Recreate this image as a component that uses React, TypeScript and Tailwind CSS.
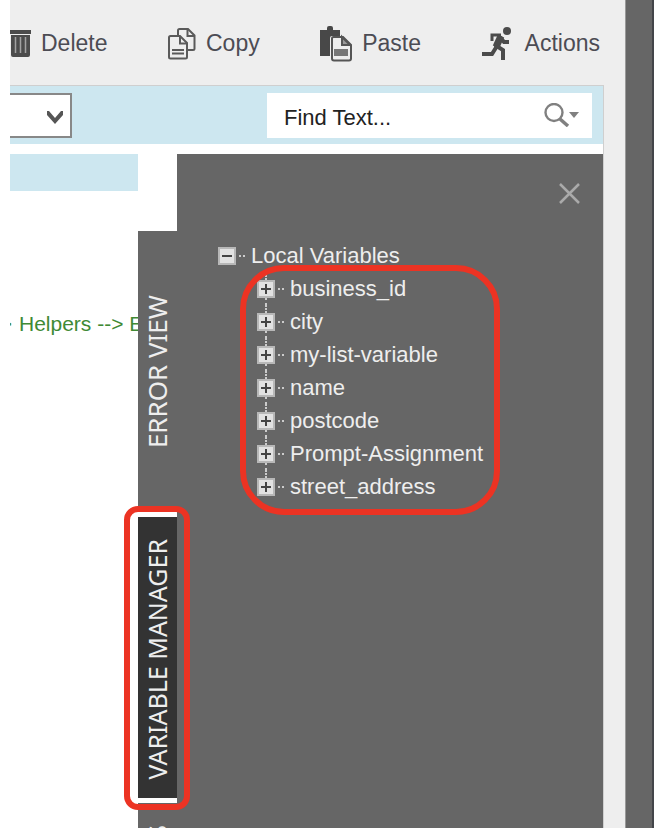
import React from "react";

const variables = [
  "business_id",
  "city",
  "my-list-variable",
  "name",
  "postcode",
  "Prompt-Assignment",
  "street_address",
];

function TrashIcon() {
  return (
    <svg width="22" height="28" viewBox="0 0 22 28" className="shrink-0" aria-hidden="true">
      <path d="M0 0h21v4H0zM1 5h19v20a2 2 0 0 1-2 2H3a2 2 0 0 1-2-2z" fill="#4b4b4b" />
      <path d="M5.5 7v16M10.5 7v16M15.5 7v16" stroke="#a2a2a2" strokeWidth="1.5" />
    </svg>
  );
}

function CopyIcon() {
  return (
    <svg width="28" height="32" viewBox="0 0 28 32" fill="none" stroke="#5a5a5a" strokeWidth="2" className="shrink-0" aria-hidden="true">
      <path d="M10 8V2.500q0-1.500 1.500-1.500H20l6.500 6.500V20.500q0 1.500-1.500 1.500H20" />
      <path d="M19.500 1v7h7" />
      <path d="M2.500 8H12l7 7v14q0 1.500-1.500 1.500h-15Q1 30.500 1 29V9.500Q1 8 2.500 8z" />
      <path d="M12 8v7.500h7" />
      <path d="M4 22h12M4 25.500h12" />
    </svg>
  );
}

function PasteIcon() {
  return (
    <svg width="32" height="36" viewBox="0 0 32 36" className="shrink-0" aria-hidden="true">
      <path d="M0 4h7V2Q7 0 9 0h2q2 0 2 2v2h7v6h-8q-2 0-2 2v18H0z" fill="#484848" />
      <path d="M13.500 11H23l8 8v13.500q0 2-2 2H14q-2 0-2-2V12.500q0-1.500 1.500-1.500z" fill="#eeeeee" stroke="#555555" strokeWidth="2" />
      <path d="M22 11v8h8z" fill="#999999" stroke="#555555" strokeWidth="2" />
      <path d="M14 23h14v7H14z" fill="#777777" />
    </svg>
  );
}

function RunnerIcon() {
  return (
    <svg width="29" height="34" viewBox="0 0 29 34" fill="none" stroke="#4b4b4b" strokeWidth="4" className="shrink-0" aria-hidden="true">
      <circle cx="25" cy="4" r="4" fill="#4b4b4b" stroke="none" />
      <path d="M10 14V8h9" strokeWidth="3" />
      <path d="M19 9l-5 11" strokeWidth="7" />
      <path d="M18 10l4 5h5" />
      <path d="M13 18l8 5v10" />
      <path d="M15 19l-5 8H0" />
    </svg>
  );
}

function ToolButton({ icon, label, className = "" }: { icon: React.ReactNode; label: string; className?: string }) {
  return (
    <button type="button" className={`flex items-center whitespace-nowrap text-[23px] text-[#4c4c54] ${className}`}>
      {icon}
      {label}
    </button>
  );
}

function Toggle({ open, label }: { open: boolean; label: string }) {
  return (
    <button type="button" aria-label={label} aria-expanded={open} className="relative size-[18px] shrink-0 border-2 border-[#b8b8b8] bg-[#e2e2e2]">
      <svg width="14" height="14" viewBox="0 0 14 14" stroke="#444444" strokeWidth="2" aria-hidden="true">
        <path d={open ? "M2 7h10" : "M2 7h10M7 2v10"} />
      </svg>
    </button>
  );
}

function Dots() {
  return <span className="mr-[6px] ml-[3px] w-[6px] border-t-2 border-dotted border-[#cccccc]" />;
}

function VariableTree() {
  return (
    <ul className="pl-[41px] text-[22px] leading-[33px] text-[#eeeeee]">
      <li>
        <div className="flex h-[33px] items-center">
          <Toggle open label="Collapse Local Variables" />
          <Dots />
          Local Variables
        </div>
        <div className="relative mr-[103px]">
          <ul className="pl-[39px]">
            {variables.map((name, i) => (
              <li key={name} className="flex h-[33px] items-center">
                <span className="flex h-full flex-col items-center">
                  <span className="h-[8px] border-l-2 border-dotted border-[#cccccc]" />
                  <Toggle open={false} label={`Expand ${name}`} />
                  {i < variables.length - 1 && <span className="flex-1 border-l-2 border-dotted border-[#cccccc]" />}
                </span>
                <Dots />
                {name}
              </li>
            ))}
          </ul>
          <span aria-hidden="true" className="pointer-events-none absolute -top-[7px] right-0 -bottom-[12px] left-[22px] rounded-[44px] border-6 border-[#ec3323]" />
        </div>
      </li>
    </ul>
  );
}

function SideTab({ label, active = false, className = "justify-center text-[25px]" }: { label: string; active?: boolean; className?: string }) {
  return (
    <button
      type="button"
      className={`relative flex h-[281px] w-full shrink-0 flex-col items-center ${className} ${active ? "bg-[#333333] pt-1" : "bg-[#666666]"}`}
    >
      <span className="rotate-180 font-['Noto_Sans',sans-serif] leading-[39px] whitespace-nowrap text-[#eeeeee] [writing-mode:vertical-rl]">
        {label}
      </span>
      {active && (
        <span aria-hidden="true" className="pointer-events-none absolute -top-[11px] -right-[13px] -bottom-[12px] -left-[14px] z-10 rounded-[14px] border-6 border-[#ec3323]" />
      )}
    </button>
  );
}

export default function App() {
  return (
    <div className="h-screen overflow-hidden bg-white pr-1 pb-[2px] pl-[10px] font-['Liberation_Sans',Arial,sans-serif]">
      <div className="flex h-full overflow-hidden bg-[#eeeeee]">
        <div className="flex min-w-0 flex-1 flex-col">
          <header className="flex h-[85px] shrink-0 items-center justify-between pt-[2px] pr-1">
            <ToolButton icon={<TrashIcon />} label="Delete" className="gap-[9px]" />
            <ToolButton icon={<CopyIcon />} label="Copy" className="gap-[10px]" />
            <ToolButton icon={<PasteIcon />} label="Paste" className="gap-[10px]" />
            <ToolButton icon={<RunnerIcon />} label="Actions" className="gap-[14px]" />
          </header>

          <main className="flex min-h-0 flex-1 flex-col border-t border-r border-[#cfcfcf] bg-white">
            <div className="flex h-[58px] shrink-0 items-center justify-between bg-[#cde7f0] pr-[11px]">
              <div className="relative w-[62px]">
                <select aria-label="Scope" className="block h-[45px] w-full appearance-none border-2 border-l-0 border-[#888888] bg-white" />
                <svg width="16" height="14" viewBox="0 0 16 14" className="pointer-events-none absolute top-[17px] right-[9px]" aria-hidden="true">
                  <path d="M0 1h2l6 7 6-7h2v4l-8 9-8-9z" fill="#555555" />
                </svg>
              </div>
              <div className="flex h-[45px] w-[325px] items-center bg-white pr-[13px] pl-[17px]">
                <input
                  aria-label="Find text"
                  placeholder="Find Text..."
                  className="min-w-0 flex-1 pt-1 text-[22px] outline-none placeholder:text-[#222222]"
                />
                <button type="button" aria-label="Search options">
                  <svg width="36" height="24" viewBox="0 0 36 24" aria-hidden="true">
                    <circle cx="11" cy="9.500" r="8.500" fill="none" stroke="#808080" strokeWidth="2.400" />
                    <path d="M17 16l8 7" stroke="#808080" strokeWidth="3.500" />
                    <path d="M26 9h10l-5 6z" fill="#808080" />
                  </svg>
                </button>
              </div>
            </div>

            <div className="flex min-h-0 flex-1 pt-[10px]">
              <section className="min-w-0 flex-1 overflow-hidden">
                <div className="h-[37px] bg-[#cde7f0]" />
                <p className="flex gap-[7px] pt-[117px] text-[21px] leading-[32px] whitespace-pre text-[#3f8a35]">
                  <span className="flex w-[2px] shrink-0 justify-end overflow-hidden">{">"}</span>
                  {"Helpers --> Error"}
                </p>
              </section>
              <nav aria-label="Side panels" className="mt-[77px] flex w-[39px] flex-col gap-[5px]">
                <SideTab label="ERROR VIEW" className="justify-center text-[26px]" />
                <SideTab label="VARIABLE MANAGER" active />
                <SideTab label="S" className="justify-start pt-[22px] text-[25px]" />
              </nav>
              <aside className="w-[426px] bg-[#666666]">
                <div className="flex h-[85px] items-start justify-end pt-[29px] pr-[23px]">
                  <button type="button" aria-label="Close">
                    <svg width="21" height="21" viewBox="0 0 21 21" stroke="#aaaaaa" strokeWidth="2.500" aria-hidden="true">
                      <path d="M1 1l19 19M20 1L1 20" />
                    </svg>
                  </button>
                </div>
                <VariableTree />
              </aside>
            </div>
          </main>
        </div>
        <div className="ml-[21px] w-[29px] border-r-2 border-l border-r-[#434549] border-l-[#999999] bg-[#666666]" />
      </div>
    </div>
  );
}
